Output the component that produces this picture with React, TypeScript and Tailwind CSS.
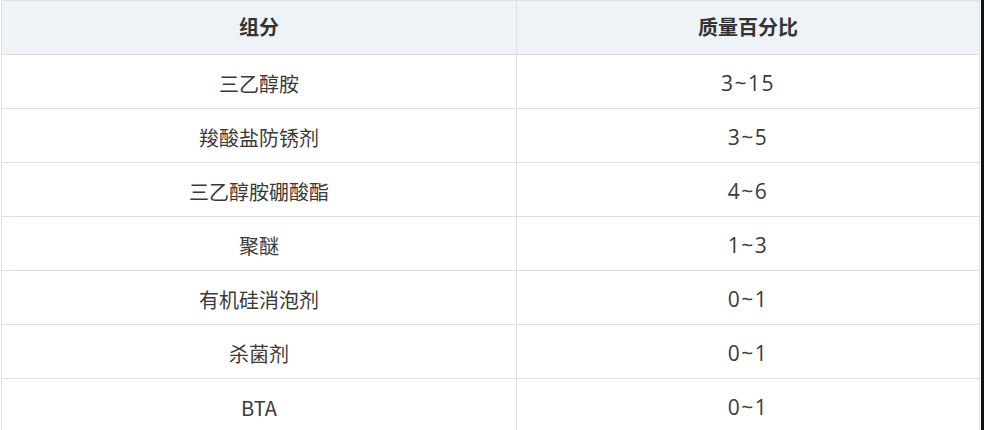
const rows: [string, string][] = [
  ["三乙醇胺", "3~15"],
  ["羧酸盐防锈剂", "3~5"],
  ["三乙醇胺硼酸酯", "4~6"],
  ["聚醚", "1~3"],
  ["有机硅消泡剂", "0~1"],
  ["杀菌剂", "0~1"],
  ["BTA", "0~1"],
];

const font = "font-['Microsoft_YaHei','Noto_Sans_CJK_SC',sans-serif]";

export default function App() {
  return (
    <div className={`flex h-[430px] w-[984px] overflow-hidden bg-white pl-px ${font}`}>
      <div className="w-[979px] shrink-0 border-x border-t border-[#dde1e5]">
        <div className="grid h-[54px] grid-cols-[515px_1fr] border-b border-[#d7dde2] bg-[#eef3f7] text-[20px] font-bold text-[#333]">
          <div className="flex items-center justify-center border-r border-[#dde1e5] pb-0.5">组分</div>
          <div className="flex items-center justify-center pb-0.5">质量百分比</div>
        </div>
        {rows.map(([name, value]) => (
          <div
            key={name}
            className="grid h-[54px] grid-cols-[515px_1fr] border-b border-[#dde1e5] text-[20px] text-[#3a3a3a]"
          >
            <div className="flex items-center justify-center border-r border-[#dde1e5] pt-1">{name}</div>
            <div className="flex items-center justify-center pt-1 font-['Open_Sans',sans-serif] text-[21px] tracking-[1.5px]">
              {value}
            </div>
          </div>
        ))}
      </div>
      <div className="w-px shrink-0" />
      <div className="w-[3px] shrink-0 bg-[#111]" />
    </div>
  );
}
